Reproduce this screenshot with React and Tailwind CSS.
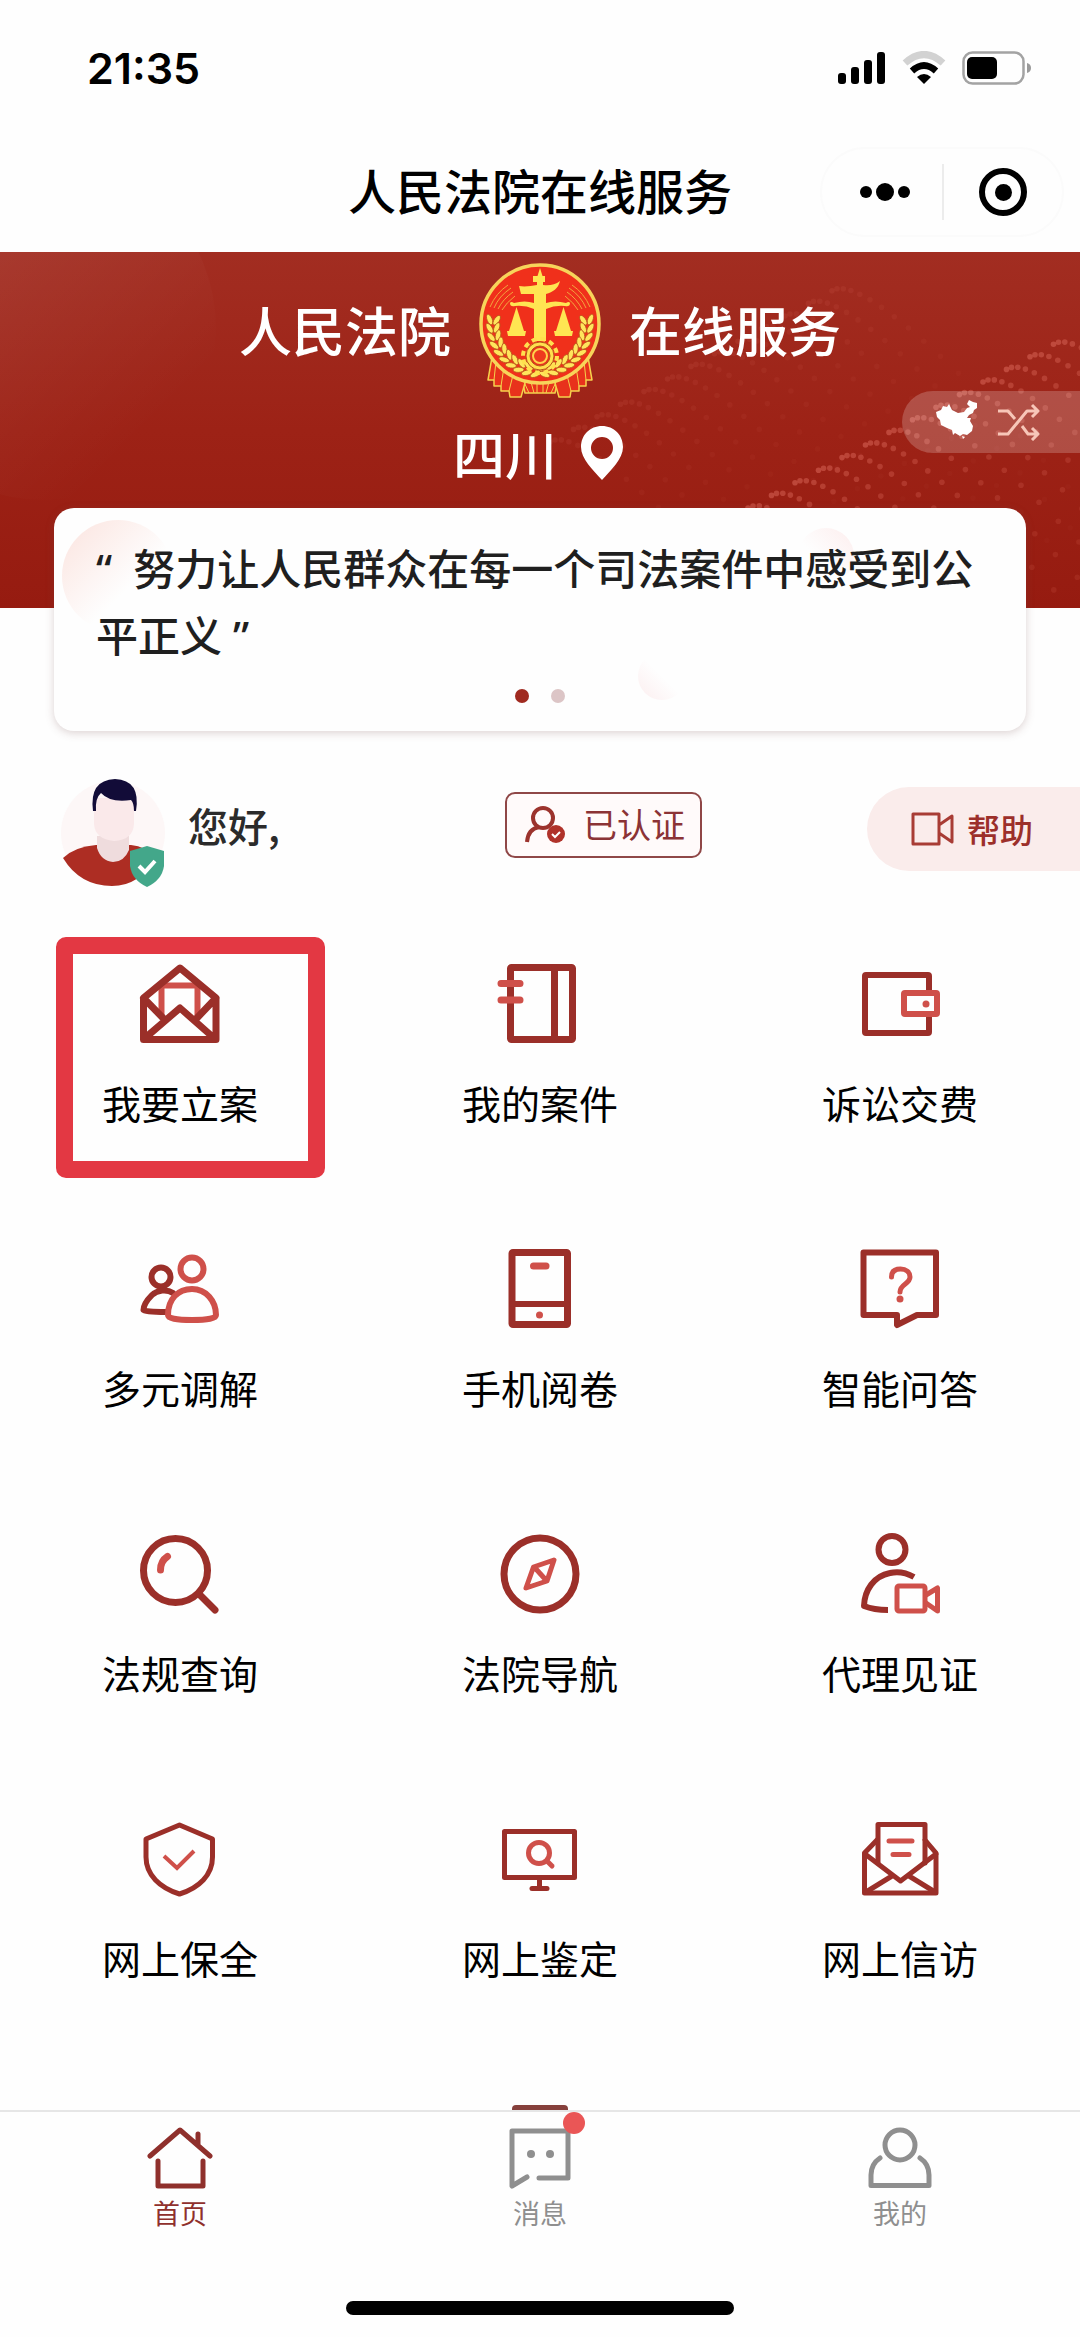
import React from "react";

const DARK = "#9b2f29";
const LIGHT = "#cf504a";

function Icon({ children, w = 7 }) {
  return (
    <svg
      viewBox="0 0 80 80"
      className="size-20 overflow-visible"
      fill="none"
      stroke={DARK}
      strokeWidth={w}
      strokeLinecap="round"
      strokeLinejoin="round"
      aria-hidden="true"
    >
      {children}
    </svg>
  );
}

const services = [
  {
    label: "我要立案",
    marked: true,
    icon: (
      <Icon>
        <path stroke={LIGHT} strokeWidth="6" strokeLinecap="butt" strokeLinejoin="miter" d="M21.500 52V21.500H57.500V52" />
        <path d="M3.500 34L40 4L76 34V75.500H3.500ZM3.500 34L23 54M76 34L57 54M5 74L40 44L74 74" />
      </Icon>
    ),
  },
  {
    label: "我的案件",
    icon: (
      <Icon>
        <rect x="10.500" y="3.500" width="62" height="72" rx="1" />
        <path d="M54.500 4V75" />
        <path stroke={LIGHT} d="M1 19.500H20M1 36H20" />
      </Icon>
    ),
  },
  {
    label: "诉讼交费",
    icon: (
      <Icon w={6}>
        <rect x="5" y="11" width="64" height="58" rx="1" />
        <rect x="44" y="29" width="33" height="21" rx="1" stroke={LIGHT} fill="#fefefe" />
        <circle cx="66" cy="40" r="3.500" fill={LIGHT} stroke="none" />
      </Icon>
    ),
  },
  {
    label: "多元调解",
    icon: (
      <Icon w={6}>
        <circle cx="21" cy="28" r="9.500" />
        <path d="M33 44C27 40 17 41 12 46C6 52 3.500 57 3.500 61Q5 63 26 63" />
        <circle cx="52" cy="20" r="11.500" stroke={LIGHT} />
        <path
          stroke={LIGHT}
          fill="#fefefe"
          d="M28 66C28 50 38 40 52 40C66 40 76 52 76 66Q76 71 52 71Q28 71 28 66Z"
        />
      </Icon>
    ),
  },
  {
    label: "手机阅卷",
    icon: (
      <Icon>
        <rect x="12" y="3.500" width="55.500" height="72" rx="1" />
        <path d="M12 55H67" strokeWidth="6" />
        <path stroke={LIGHT} d="M33.500 17H46" />
        <circle cx="39.500" cy="66" r="3.500" fill={LIGHT} stroke="none" />
      </Icon>
    ),
  },
  {
    label: "智能问答",
    icon: (
      <Icon w={6}>
        <path d="M3.500 3.500H76V66H57L37 76V66H3.500Z" />
        <path stroke={LIGHT} strokeWidth="5" d="M31.500 28C31.500 22 35 20 40.500 20C46 20 50 23 50 28C50 35 40 35 40 43" />
        <circle cx="40" cy="50" r="3.500" fill={LIGHT} stroke="none" />
      </Icon>
    ),
  },
  {
    label: "法规查询",
    icon: (
      <Icon>
        <circle cx="35.500" cy="36.500" r="32" />
        <path d="M59 60L75 76" />
        <path stroke={LIGHT} d="M27.500 22.500Q20.500 27 20.500 36" />
      </Icon>
    ),
  },
  {
    label: "法院导航",
    icon: (
      <Icon>
        <circle cx="40" cy="40" r="36" />
        <path stroke={LIGHT} strokeWidth="5" d="M54 26L33.500 33L26 54L47 47ZM36 35L45 45" />
      </Icon>
    ),
  },
  {
    label: "代理见证",
    icon: (
      <Icon w={6}>
        <circle cx="32" cy="15.500" r="13.500" />
        <path strokeLinecap="butt" d="M54 43C46 38.500 38 37 30 39C14 42 4.500 56 4 72Q14 76 28 76" />
        <rect stroke={LIGHT} strokeWidth="5" x="37" y="52" width="28" height="25" rx="2" />
        <path stroke={LIGHT} strokeWidth="5" d="M66 61L77.500 54V77L66 69" />
      </Icon>
    ),
  },
  {
    label: "网上保全",
    icon: (
      <Icon w={5}>
        <path d="M39.500 6L72.500 20V38C72.500 56 59 69 39.500 75C20 69 6 56 6 38V20Z" />
        <path stroke={LIGHT} strokeWidth="4" strokeLinecap="butt" strokeLinejoin="miter" d="M24 37L37 49L54 32" />
      </Icon>
    ),
  },
  {
    label: "网上鉴定",
    icon: (
      <Icon w={5}>
        <rect x="4.500" y="12.500" width="70" height="46" />
        <path d="M39.500 60V68" />
        <path d="M32 69.500H47" />
        <circle stroke={LIGHT} cx="39" cy="34" r="10.500" />
        <path stroke={LIGHT} d="M47 42L52 47" />
      </Icon>
    ),
  },
  {
    label: "网上信访",
    icon: (
      <Icon w={5}>
        <path d="M17 21L4.500 34V74H76V34L65 21" />
        <path d="M18 44V5.500H65V44" />
        <path d="M5 35L40.500 62L76 35M6 73L32 57M75 73L49 57" />
        <path stroke={LIGHT} d="M29 22H52M33 35.500H49" />
      </Icon>
    ),
  },
];

// Left half of the wheat wreath, listed from its upper end down to the gear.
const grains = Array.from({ length: 10 }, (_, i) => {
  const deg = 186 - i * 10;
  const a = (deg * Math.PI) / 180;
  return { x: 61 + 47 * Math.cos(a), y: 61 + 47 * Math.sin(a), turn: deg + 90 };
});

function Wheat() {
  return grains.map((g, i) => (
    <g key={i} transform={`translate(${g.x} ${g.y}) rotate(${g.turn})`}>
      <ellipse cx="1" cy="-3.500" rx="5.500" ry="2.600" transform="rotate(-28)" />
      <ellipse cx="1" cy="3.500" rx="5.500" ry="2.600" transform="rotate(28)" />
    </g>
  ));
}

function Emblem() {
  return (
    <svg viewBox="0 0 122 136" className="h-[136px] w-[122px] shrink-0" role="img" aria-label="法院徽章">
      <g fill="#e8321c" stroke="#f5d24c" strokeWidth="1.500" strokeLinejoin="round">
        <path d="M42 112H80L76 130H46Z" />
        <path d="M13 94L9 117H15V123H22V128H30L31 134H42L46 120L54 100Z" />
        <path d="M109 94L113 117H107V123H100V128H92L91 134H80L76 120L68 100Z" />
        <path
          strokeWidth="1"
          d="M17 98L15 117M25 104L22 123M34 112L30 128M105 98L107 117M97 104L100 123M88 112L92 128M45 119L50 130M52 119L55 130M58 119V130M64 119V130M70 119L67 130M77 119L72 130"
        />
      </g>
      <circle cx="61" cy="61" r="59" fill="#f0301b" stroke="#f7d45a" strokeWidth="3.500" />
      <g fill="none" stroke="#f2a63e" strokeWidth="1">
        <path d="M11 44Q17 30 29 22M15 45Q20 33 32 25M19 46Q24 36 34 29M23 47Q27 40 36 33" />
        <path d="M111 44Q105 30 93 22M107 45Q102 33 90 25M103 46Q98 36 88 29M99 47Q95 40 86 33" />
      </g>
      <g fill="#ffe55c" stroke="#b9551a" strokeWidth="0.800">
        <Wheat />
        <g transform="translate(122 0) scale(-1 1)">
          <Wheat />
        </g>
      </g>
      <g fill="#ffe552">
        <path d="M61 5L63.500 13H66V19H64V22C70 23 76 22 81 18C79 26 74 29 67 31V78H55V31H42L40 23C46 24 52 23 58 22V19H54V13H58.500Z" />
        <path d="M31 40Q32 38 35 40Q46 37 55 40V46Q46 42 36 43Q31 44 31 40ZM91 40Q90 38 87 40Q76 37 67 40V46Q76 42 86 43Q91 44 91 40Z" />
        <path d="M37.500 44L30 68H28L29 73H46L47 68H45ZM84.500 44L77 68H75L76 73H93L94 68H92Z" />
      </g>
      <circle cx="61" cy="93" r="17" fill="none" stroke="#ffe04e" strokeWidth="4" strokeDasharray="5 3.900" />
      <circle cx="61" cy="93" r="14" fill="#ffe04e" stroke="#b9541a" strokeWidth="1" />
      <circle cx="61" cy="93" r="10" fill="#e8321c" stroke="#b9541a" strokeWidth="1" />
      <circle cx="61" cy="93" r="7" fill="#ee3a1e" stroke="#ffd24a" strokeWidth="2" />
    </svg>
  );
}

// Rows of dots that start dense and spread out towards the lower right.
function dotRows(x0, y0, rows, strength) {
  const dots = [];
  for (let r = 0; r < rows; r++) {
    let x = x0 + r * 23.5;
    let y = y0 - r * 12.6;
    for (let i = 0; i < 18; i++) {
      if (x < 545 && y < 350 && y > 2) {
        dots.push([x, y, strength * Math.max(1 - i * 0.055, 0.3)]);
      }
      x += 5 + i * 1.3;
      y += -2 + i * 1.9;
    }
  }
  return dots;
}

const waveDots = [...dotRows(208, 256, 14, 0.52), ...dotRows(10, 190, 13, 0.15)];

function DotWave() {
  return (
    <svg
      viewBox="0 0 540 356"
      preserveAspectRatio="xMaxYMid slice"
      className="absolute inset-y-0 right-0 h-full w-1/2"
      aria-hidden="true"
    >
      {waveDots.map(([x, y, o], i) => (
        <circle key={i} cx={x} cy={y} r="2.800" fill="#dc6a5c" opacity={o} />
      ))}
    </svg>
  );
}

function StatusBar() {
  return (
    <div className="flex h-[132px] items-center justify-between pt-1 pr-12 pl-[87px]">
      <span className="font-['Inter',sans-serif] text-[43px] leading-none font-semibold text-black">21:35</span>
      <div className="flex items-center gap-4">
        <svg viewBox="0 0 48 34" className="h-[34px] w-12" aria-label="信号">
          <rect x="0" y="22" width="8" height="11" rx="3" />
          <rect x="13" y="16" width="8" height="17" rx="3" />
          <rect x="26" y="9" width="8" height="24" rx="3" />
          <rect x="39" y="1" width="8" height="32" rx="3" />
        </svg>
        <svg viewBox="0 0 44 34" className="h-[34px] w-11" fill="none" aria-label="无线网络">
          <path d="M3 12Q22 -5 41 12" stroke="#d2d2d2" strokeWidth="7" />
          <path d="M10 20Q22 9 34 20" stroke="#000" strokeWidth="6.500" />
          <path d="M22 33L15 26Q22 20 29 26Z" fill="#000" />
        </svg>
        <svg viewBox="0 0 70 34" className="h-[34px] w-[70px]" fill="none" aria-label="电量">
          <rect x="1.500" y="1.500" width="60" height="31" rx="9" stroke="#a3a3a3" strokeWidth="2.500" />
          <rect x="5" y="6" width="30" height="22" rx="5" fill="#000" />
          <path d="M65 12Q69 13 69 17Q69 21 65 22Z" fill="#9a9a9a" />
        </svg>
      </div>
    </div>
  );
}

function TitleBar() {
  return (
    <header className="grid h-[120px] grid-cols-[1fr_auto_1fr] items-center">
      <h1 className="col-start-2 pb-1.5 text-[48px] leading-none font-medium text-black">人民法院在线服务</h1>
      <div className="mr-4 flex h-[90px] items-center justify-self-end rounded-full border-2 border-[#fbfbfb]">
        <button type="button" aria-label="更多" className="flex h-full w-[120px] items-center justify-center gap-1 pl-1.5">
          <span className="size-3 rounded-full bg-black" />
          <span className="size-[18px] rounded-full bg-black" />
          <span className="size-3 rounded-full bg-black" />
        </button>
        <span className="h-14 w-0.5 bg-[#ececec]" />
        <button type="button" aria-label="关闭" className="flex h-full w-[118px] items-center justify-center">
          <span className="flex size-12 items-center justify-center rounded-full border-6 border-black">
            <span className="size-[17px] rounded-full bg-black" />
          </span>
        </button>
      </div>
    </header>
  );
}

function Banner() {
  return (
    <section className="relative overflow-hidden bg-linear-to-b from-[#a22d21] via-[#9d2216] to-[#961b10] pt-[11px] pb-[121px] text-white">
      <div className="absolute -top-24 -left-32 size-[344px] rounded-full bg-linear-to-tl from-transparent from-20% to-white/10" />
      <DotWave />
      <div className="relative flex items-center justify-center gap-7 text-[53px] leading-none font-medium">
        <span className="pb-1">人民法院</span>
        <Emblem />
        <span className="pb-1">在线服务</span>
      </div>
      <button
        type="button"
        className="relative mx-auto mt-[22px] mb-0.5 flex h-16 items-center gap-6 pr-1 text-[52px] leading-none font-medium"
      >
        四川
        <svg viewBox="0 0 42 54" className="h-[54px] w-[42px]" aria-hidden="true">
          <path
            fill="#fff"
            fillRule="evenodd"
            d="M21 0C9 0 0 9 0 21C0 33 12 44 21 54C30 44 42 33 42 21C42 9 33 0 21 0ZM21 11A11 11 0 1 1 21 33A11 11 0 1 1 21 11Z"
          />
        </svg>
      </button>
      <button
        type="button"
        aria-label="切换地区"
        className="absolute top-[139px] right-0 flex h-[62px] w-[178px] items-center gap-5 rounded-l-full bg-white/20 pl-[34px]"
      >
        <svg viewBox="0 0 42 44" className="h-11 w-[42px]" aria-hidden="true">
          <path
            fill="#fff"
            d="M0 12L5 10L7 6L11 7L13 4L16 10L22 13L28 12L31 8L34 7L31 4L33 0L37 2L41 3V8L38 10L37 13L33 15L31 18L35 18L34 21L37 26L36 31L31 35L27 34L24 36L19 33L17 35L16 30L11 28L5 25L4 20L1 17ZM26 36L29 37L27 39Z"
          />
        </svg>
        <svg
          viewBox="0 0 42 38"
          className="h-[38px] w-[42px]"
          fill="none"
          stroke="#f7c6b8"
          strokeWidth="3"
          strokeLinejoin="round"
          aria-hidden="true"
        >
          <path d="M0 8H10L17 16M0 31H10L29 8H40M34 2L40 8L34 14M24 23L30 31H40M34 25L40 31L34 37" />
        </svg>
      </button>
    </section>
  );
}

function QuoteCard() {
  return (
    <section className="relative mx-[54px] -mt-[100px] overflow-hidden rounded-[20px] bg-[#fefefe] px-[42px] pt-[27px] pb-7 shadow-[0_2px_8px_rgba(120,80,80,0.25)]">
      <div className="absolute top-3 left-2 h-28 w-28 rounded-full bg-linear-to-br from-[#fbe3de] to-transparent to-60%" />
      <div className="absolute top-5 left-[744px] size-14 rounded-full bg-linear-to-tr from-transparent from-40% to-[#fdeeee]" />
      <div className="absolute top-36 left-[584px] size-12 rounded-full bg-linear-to-tr from-[#fceeef] to-transparent to-50%" />
      <p className="relative font-['Noto_Sans','Noto_Sans_CJK_SC',sans-serif] text-[42px] leading-[67px] font-medium text-[#1f1f1f]">
        {"“\u2002努力让人民群众在每一个司法案件中感受到公平正义 ”"}
      </p>
      <div className="relative mt-5 flex justify-center gap-[22px]">
        <span className="size-3.5 rounded-full bg-[#a02a20]" />
        <span className="size-3.5 rounded-full bg-[#dcc5c6]" />
      </div>
    </section>
  );
}

function UserRow() {
  return (
    <section className="mt-[47px] grid h-[110px] grid-cols-[505fr_362fr_213fr] items-center">
      <div className="flex items-center gap-5 pl-[58px]">
        <svg viewBox="0 0 110 110" className="size-[110px]" aria-label="头像" role="img">
          <circle cx="55" cy="55" r="52" fill="#fdf7f7" />
          <path d="M5 80Q16 69 38 67H73Q88 68 96 80Q82 108 54 108Q22 108 5 80Z" fill="#ad2d23" />
          <path d="M39 58H71V72Q66 84 55 84Q43 83 39 70Z" fill="#efdcdd" />
          <path d="M36 20H76V46Q75 62 56 63Q37 61 36 46Z" fill="#fae9ea" />
          <path d="M35 33Q31 2 57 1Q83 2 78 33H76Q76 25 73 22Q52 25 43 15Q37 20 38 33Z" fill="#120c38" />
          <path d="M89 68L106 73V88Q104 102 89 109Q74 102 72 88V73Z" fill="#43a78a" />
          <path d="M81 88L87 94L97 83" fill="none" stroke="#fff" strokeWidth="4" />
        </svg>
        <span className="pb-4 text-[40px] leading-none font-medium text-[#2b2b2b]">您好,</span>
      </div>
      <button
        type="button"
        className="mb-4 flex h-[66px] w-[197px] items-center gap-[18px] justify-self-start rounded-[10px] border-2 border-[#8f4747] bg-[#fffafa] pl-[18px] text-[34px] leading-none text-[#8b3336]"
      >
        <svg viewBox="0 0 40 38" className="h-[38px] w-10 shrink-0" fill="none" stroke="#9c332d" strokeWidth="4" aria-hidden="true">
          <circle cx="18" cy="12" r="10" />
          <path d="M2 36Q3 23 14 21" />
          <circle cx="31" cy="28" r="9" fill="#b0322a" stroke="none" />
          <path d="M27 28L30 31L35 26" stroke="#fff" strokeWidth="2" />
        </svg>
        <span className="pb-0.5">已认证</span>
      </button>
      <button
        type="button"
        className="mb-2 flex h-[84px] items-center gap-3 rounded-l-full bg-[#faeceb] pl-11 text-[33px] leading-none font-medium text-[#9c2f2a]"
      >
        <svg viewBox="0 0 44 34" className="h-[34px] w-11" fill="none" stroke="#a83c35" strokeWidth="3" strokeLinejoin="round" aria-hidden="true">
          <path d="M2 2H28V32H2ZM28 13L41 4V30L28 21" />
        </svg>
        帮助
      </button>
    </section>
  );
}

function ServiceGrid() {
  return (
    <main className="mt-[49px] grid grid-cols-3">
      {services.map((s) => (
        <button
          key={s.label}
          type="button"
          className="relative flex h-[285px] flex-col items-center gap-[30px] pt-[27px] text-[39px] leading-[56px] text-black"
        >
          {s.marked && (
            <span className="absolute top-0 right-[35px] left-14 h-[241px] rounded-[10px] border-17 border-[#e33843]" />
          )}
          {s.icon}
          <span>{s.label}</span>
        </button>
      ))}
      <div className="col-start-2 flex h-[33px] justify-center overflow-hidden pt-7">
        <span className="h-10 w-14 rounded-t-sm bg-[#86403c]" />
      </div>
    </main>
  );
}

const tabs = [
  {
    label: "首页",
    active: true,
    icon: <path d="M3 29L33 3L63 29M51 18V7M11 34V59H56V34" />,
  },
  {
    label: "消息",
    badge: true,
    icon: (
      <>
        <path d="M20 50L5 59V4H61V51H32" />
        <circle cx="24" cy="27" r="4" fill="currentColor" stroke="none" />
        <circle cx="43" cy="27" r="4" fill="currentColor" stroke="none" />
      </>
    ),
  },
  {
    label: "我的",
    icon: (
      <>
        <circle cx="33" cy="18" r="15" />
        <path d="M13 31Q4 37 4 48V58.500H62V48Q62 37 53 31" />
      </>
    ),
  },
];

function TabBar() {
  return (
    <footer className="border-t-2 border-[#e6e6e6] bg-[#fefefe] pb-[22px]">
      <nav className="grid grid-cols-3">
        {tabs.map((t) => (
          <a
            key={t.label}
            href="#"
            aria-current={t.active ? "page" : undefined}
            className={
              t.active
                ? "flex flex-col items-center gap-1.5 pt-[15px] text-[27px] leading-9 text-[#8f302c]"
                : "flex flex-col items-center gap-1.5 pt-[15px] text-[27px] leading-9 text-[#8f8f8f]"
            }
          >
            <span className="relative">
              <svg
                viewBox="0 0 66 62"
                className="h-[62px] w-[66px]"
                fill="none"
                stroke="currentColor"
                strokeWidth="5"
                strokeLinecap="round"
                strokeLinejoin="round"
                aria-hidden="true"
              >
                {t.icon}
              </svg>
              {t.badge && <span className="absolute -top-[15px] -right-3 size-[22px] rounded-full bg-[#ea5656]" />}
            </span>
            {t.label}
          </a>
        ))}
      </nav>
      <div className="mx-auto mt-[70px] h-3.5 w-[36%] rounded-full bg-black" />
    </footer>
  );
}

export default function App() {
  return (
    <div
      lang="zh-CN"
      className="flex min-h-screen flex-col bg-[#fefefe] font-['Noto_Sans_CJK_SC',sans-serif]"
    >
      <StatusBar />
      <TitleBar />
      <Banner />
      <QuoteCard />
      <UserRow />
      <ServiceGrid />
      <TabBar />
    </div>
  );
}
